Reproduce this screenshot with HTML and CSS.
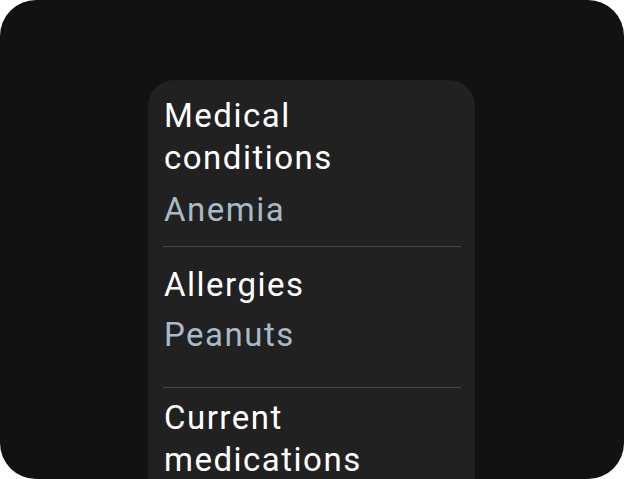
FILE: index.html
```html
<!DOCTYPE html>
<html>
<head>
<meta charset="utf-8">
<link rel="stylesheet" href="styles.css">
</head>
<body>
<div class="screen">
  <div class="card">
    <div class="item item-first">
      <div class="label">Medical<br>conditions</div>
      <div class="value">Anemia</div>
    </div>
    <div class="divider"></div>
    <div class="item item-second">
      <div class="label">Allergies</div>
      <div class="value">Peanuts</div>
    </div>
    <div class="divider"></div>
    <div class="item item-third">
      <div class="label">Current<br>medications</div>
    </div>
  </div>
</div>
</body>
</html>
```
FILE: styles.css
```css
html, body {
  margin: 0;
  padding: 0;
  background: #ffffff;
}
body {
  width: 624px;
  height: 479px;
  overflow: hidden;
  font-family: Roboto, "Noto Sans", sans-serif;
}
.screen {
  width: 624px;
  height: 479px;
  background: #121212;
  border-radius: 36px;
  overflow: hidden;
  display: flex;
  justify-content: center;
  padding-top: 80px;
  box-sizing: border-box;
}
.card {
  width: 327px;
  margin-left: -1px;
  background: #212121;
  border-radius: 26px 26px 0 0;
  padding: 0 14px 0 16px;
  box-sizing: border-box;
  height: 460px;
}
.item {
  display: flex;
  flex-direction: column;
}
.item-first {
  padding: 15px 0 15px;
}
.item-second {
  padding: 16.5px 0 31px;
}
.item-third {
  padding: 9px 0 0;
}
.label {
  font-size: 33px;
  line-height: 42px;
  letter-spacing: 1.5px;
  color: #ffffff;
}
.value {
  font-size: 33px;
  line-height: 42px;
  letter-spacing: 1.5px;
  color: #a8b9c7;
  margin-top: 10px;
}
.item-second .value {
  margin-top: 8px;
}
.divider {
  height: 1px;
  background: #464646;
  margin-left: -1px;
}
```
